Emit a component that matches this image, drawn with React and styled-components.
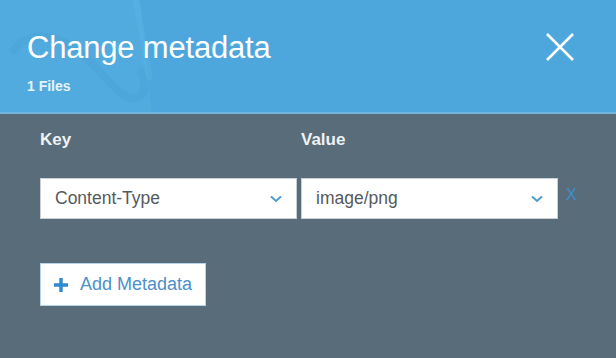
import React from "react";
import styled, { createGlobalStyle } from "styled-components";

const Global = createGlobalStyle`
  html, body { margin: 0; padding: 0; }
  body {
    width: 616px;
    height: 358px;
    overflow: hidden;
    background: #596c7a;
    font-family: "Liberation Sans", Arial, sans-serif;
  }
`;

const Dialog = styled.div`
  width: 616px;
  height: 358px;
  display: flex;
  flex-direction: column;
  background: #596c7a;
`;

const Header = styled.header`
  position: relative;
  height: 114px;
  box-sizing: border-box;
  padding: 29px 27px 0 27px;
  background: #4ea7dc;
  border-bottom: 2px solid #74b6dd;
  display: flex;
  justify-content: space-between;
  align-items: flex-start;
  overflow: hidden;
`;

const Decor = styled.svg`
  position: absolute;
  left: 0;
  top: 0;
  pointer-events: none;
`;

const TitleBlock = styled.div`
  position: relative;
  display: flex;
  flex-direction: column;
  gap: 11px;
`;

const Title = styled.h1`
  margin: 0;
  font-size: 31px;
  font-weight: normal;
  line-height: 38px;
  color: #ffffff;
  letter-spacing: -0.2px;
`;

const Subtitle = styled.div`
  font-size: 14px;
  font-weight: bold;
  line-height: 16px;
  color: #e6f3fb;
`;

const CloseButton = styled.button`
  position: relative;
  margin: 4px 15px 0 0;
  padding: 0;
  border: none;
  background: none;
  width: 28px;
  height: 28px;
  cursor: pointer;
  display: flex;
`;

const Body = styled.div`
  flex: 1;
  padding: 15px 0 0 40px;
  display: flex;
  flex-direction: column;
`;

const Grid = styled.div`
  display: grid;
  grid-template-columns: 257px 257px auto;
  column-gap: 4px;
  align-items: center;
`;

const Label = styled.div`
  font-size: 17px;
  font-weight: bold;
  color: #eef2f5;
  line-height: 20px;
  padding-top: 1px;
  height: 48px;
`;

const Select = styled.div`
  height: 41px;
  box-sizing: border-box;
  background: #ffffff;
  border: 1px solid #c9cfd4;
  display: flex;
  align-items: center;
  justify-content: space-between;
  padding: 0 14px 0 14px;
  font-size: 17.5px;
  color: #555a5e;
`;

const Remove = styled.span`
  font-size: 16px;
  color: #3b90d2;
  margin-left: 4px;
  margin-top: -8px;
`;

const AddButton = styled.button`
  margin-top: 44px;
  align-self: flex-start;
  height: 43px;
  width: 166px;
  box-sizing: border-box;
  background: #ffffff;
  border: 1px solid #b7d4ea;
  display: flex;
  align-items: center;
  gap: 11px;
  padding: 0 0 0 12px;
  font-family: "Liberation Sans", Arial, sans-serif;
  font-size: 18px;
  color: #4d8fcb;
  cursor: pointer;
`;

const Chevron = () => (
  <svg width="12" height="8" viewBox="0 0 12 8">
    <path d="M1 1.5 L6 6 L11 1.5" fill="none" stroke="#4c9ccc" strokeWidth="2" />
  </svg>
);

export default function App() {
  return (
    <>
      <Global />
      <Dialog>
        <Header>
          <Decor width="616" height="114" viewBox="0 0 616 114">
            <path d="M0 0 L140 0 L152 114 L0 114 Z" fill="#56b1e3" opacity="0.45" />
            <path
              d="M14 50 C28 30 60 34 82 54 C104 74 118 96 132 98 C146 100 147 82 141 72"
              fill="none"
              stroke="#4399cf"
              strokeWidth="8"
              opacity="0.22"
              strokeLinecap="round"
            />
            <path d="M136 0 L150 80" stroke="#62bbe8" strokeWidth="6" opacity="0.25" />
          </Decor>
          <TitleBlock>
            <Title>Change metadata</Title>
            <Subtitle>1 Files</Subtitle>
          </TitleBlock>
          <CloseButton aria-label="Close">
            <svg width="28" height="28" viewBox="0 0 28 28">
              <path d="M1 1 L27 27 M27 1 L1 27" stroke="#ffffff" strokeWidth="2.6" />
            </svg>
          </CloseButton>
        </Header>
        <Body>
          <Grid>
            <Label>Key</Label>
            <Label>Value</Label>
            <span />
            <Select>
              <span>Content-Type</span>
              <Chevron />
            </Select>
            <Select>
              <span>image/png</span>
              <Chevron />
            </Select>
            <Remove>X</Remove>
          </Grid>
          <AddButton>
            <svg width="16" height="16" viewBox="0 0 16 16">
              <path d="M8 1 V15 M1 8 H15" stroke="#2f8ad0" strokeWidth="3.4" />
            </svg>
            Add Metadata
          </AddButton>
        </Body>
      </Dialog>
    </>
  );
}
